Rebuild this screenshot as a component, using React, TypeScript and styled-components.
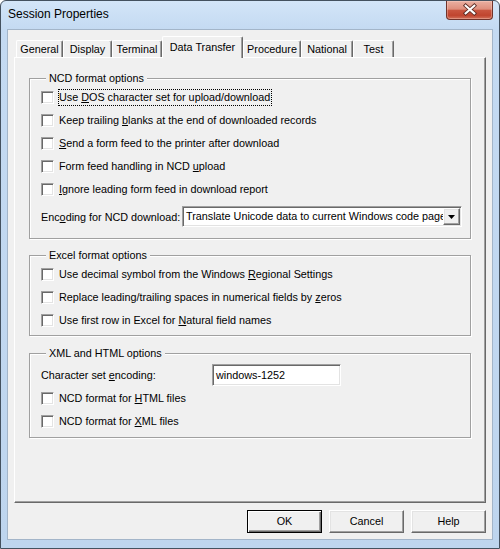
import React from 'react';
import styled, { createGlobalStyle, css } from 'styled-components';

const GlobalStyle = createGlobalStyle`
  html, body {
    margin: 0;
    padding: 0;
    background: #ffffff;
  }
  body {
    font-family: "Liberation Sans", Arial, sans-serif;
    font-size: 10.8px;
    color: #000;
  }
  * {
    box-sizing: border-box;
  }
`;

const raised = css`
  border: 1px solid;
  border-color: #fff #696969 #696969 #fff;
  box-shadow: inset -1px -1px 0 #a0a0a0, inset 1px 1px 0 #e3e3e3;
  background: #f0f0f0;
`;

const sunken = css`
  border: 1px solid;
  border-color: #a0a0a0 #fff #fff #a0a0a0;
  box-shadow: inset 1px 1px 0 #696969, inset -1px -1px 0 #e3e3e3;
  background: #fff;
`;

type Tab = { label: string; width: number; active?: boolean };

const tabs: Tab[] = [
  { label: 'General', width: 47 },
  { label: 'Display', width: 49 },
  { label: 'Terminal', width: 50 },
  { label: 'Data Transfer', width: 81, active: true },
  { label: 'Procedure', width: 58 },
  { label: 'National', width: 52 },
  { label: 'Test', width: 41 },
];

const ncdOptions: React.ReactNode[] = [
  <>Use <u>D</u>OS character set for upload/download</>,
  <>Keep trailing <u>b</u>lanks at the end of downloaded records</>,
  <><u>S</u>end a form feed to the printer after download</>,
  <>Form feed handling in NCD <u>u</u>pload</>,
  <><u>I</u>gnore leading form feed in download report</>,
];

const excelOptions: React.ReactNode[] = [
  <>Use decimal symbol from the Windows <u>R</u>egional Settings</>,
  <>Replace leading/trailing spaces in numerical fields by <u>z</u>eros</>,
  <>Use first row in Excel for <u>N</u>atural field names</>,
];

const xmlOptions: React.ReactNode[] = [
  <>NCD format for <u>H</u>TML files</>,
  <>NCD format for <u>X</u>ML files</>,
];

const CheckList: React.FC<{ items: React.ReactNode[]; focusFirst?: boolean }> = ({ items, focusFirst }) => (
  <Stack>
    {items.map((item, i) => (
      <CheckRow key={i}>
        <CheckBox />
        <Caption $focus={focusFirst && i === 0}>{item}</Caption>
      </CheckRow>
    ))}
  </Stack>
);

const App: React.FC = () => {
  return (
    <>
      <GlobalStyle />
      <Window>
        <TitleBar>
          <Title>Session Properties</Title>
          <CloseButton>
            <svg width="47" height="18" viewBox="0 0 47 18">
              <path d="M19.5 4.5 L28.5 12.5 M28.5 4.5 L19.5 12.5" stroke="#5a2a22" strokeWidth="4" strokeLinecap="square" />
              <path d="M19.5 4.5 L28.5 12.5 M28.5 4.5 L19.5 12.5" stroke="#ffffff" strokeWidth="2.2" strokeLinecap="square" />
            </svg>
          </CloseButton>
        </TitleBar>
        <Client>
          <TabRow>
            {tabs.map(t => (
              <TabItem key={t.label} $w={t.width} $active={t.active}>
                {t.label}
              </TabItem>
            ))}
          </TabRow>
          <Panel>
            <Group $pb={11} $mt={0}>
              <GroupTitle>NCD format options</GroupTitle>
              <CheckList items={ncdOptions} focusFirst />
              <FieldRow $top={8}>
                <FieldLabel $w={141}>Enc<u>o</u>ding for NCD download:</FieldLabel>
                <Select>
                  <SelectValue>Translate Unicode data to current Windows code page</SelectValue>
                  <DropButton>
                    <svg width="7" height="4" viewBox="0 0 7 4">
                      <path d="M0 0 H7 L3.5 4 Z" fill="#000" />
                    </svg>
                  </DropButton>
                </Select>
              </FieldRow>
            </Group>
            <Group $pb={6} $mt={10}>
              <GroupTitle>Excel format options</GroupTitle>
              <CheckList items={excelOptions} />
            </Group>
            <Group $pb={7} $mt={11}>
              <GroupTitle>XML and HTML options</GroupTitle>
              <FieldRow $top={0}>
                <FieldLabel $w={171}>Character set <u>e</u>ncoding:</FieldLabel>
                <TextInput>windows-1252</TextInput>
              </FieldRow>
              <Spacer />
              <CheckList items={xmlOptions} />
            </Group>
          </Panel>
          <ButtonBar>
            <Button $default>OK</Button>
            <Button>Cancel</Button>
            <Button>Help</Button>
          </ButtonBar>
        </Client>
      </Window>
    </>
  );
};

const Window = styled.div`
  width: 500px;
  height: 549px;
  display: flex;
  flex-direction: column;
  border: 1px solid #44515f;
  border-radius: 6px 6px 0 0;
  background: linear-gradient(to bottom, #d3e5f8 0px, #c4daf2 28px, #bed5ee 100%);
  padding: 0 6px 8px 6px;
`;

const TitleBar = styled.div`
  height: 28px;
  display: flex;
  justify-content: space-between;
  align-items: flex-start;
`;

const Title = styled.span`
  margin: 6px 0 0 1px;
  font-size: 12px;
  line-height: 14px;
  color: #000;
`;

const CloseButton = styled.div`
  width: 47px;
  height: 19px;
  border: 1px solid #70332b;
  border-top: none;
  border-radius: 0 0 4px 4px;
  background: linear-gradient(to bottom, #eab0a2 0%, #de8e7c 45%, #c9553f 52%, #c0452f 80%, #d2705a 100%);
  box-shadow: inset 0 0 0 1px rgba(255, 220, 210, 0.35);
  display: flex;
  align-items: center;
  justify-content: center;
`;

const Client = styled.div`
  flex: 1;
  display: flex;
  flex-direction: column;
  background: #f0f0f0;
  border: 1px solid #a3b5c9;
  padding: 6px 6px 0 6px;
`;

const TabRow = styled.div`
  height: 21px;
  display: flex;
  align-items: flex-end;
  padding-left: 2px;
`;

const TabItem = styled.div<{ $w: number; $active?: boolean }>`
  width: ${p => p.$w}px;
  height: ${p => (p.$active ? 22 : 17)}px;
  margin-bottom: ${p => (p.$active ? -1 : 0)}px;
  padding-top: ${p => (p.$active ? 3 : 1)}px;
  position: relative;
  z-index: ${p => (p.$active ? 2 : 1)};
  background: #f0f0f0;
  border-top: 1px solid #fff;
  border-left: 1px solid #fff;
  border-right: 1px solid #696969;
  box-shadow: inset -1px 0 0 #a0a0a0;
  border-radius: 2px 2px 0 0;
  line-height: 14px;
  text-align: center;
  white-space: nowrap;
`;

const Panel = styled.div`
  width: 472px;
  height: 446px;
  display: flex;
  flex-direction: column;
  padding: 14px 14px 0 14px;
  border-top: 1px solid #fff;
  border-left: 1px solid #fff;
  border-right: 1px solid #696969;
  border-bottom: 1px solid #696969;
  box-shadow: inset -1px -1px 0 #a0a0a0;
`;

const Group = styled.fieldset<{ $pb: number; $mt: number }>`
  margin: ${p => p.$mt}px 0 0 0;
  min-width: 0;
  padding: 4px 0 ${p => p.$pb}px 11px;
  border: 1px solid #a0a0a0;
  box-shadow: 1px 1px 0 #fff, inset 1px 1px 0 #fff;
`;

const GroupTitle = styled.legend`
  margin-left: 5px;
  padding: 0 3px;
  line-height: 13px;
  background: #f0f0f0;
`;

const Stack = styled.div`
  display: flex;
  flex-direction: column;
  gap: 6px;
`;

const Spacer = styled.div`
  height: 4px;
`;

const CheckRow = styled.div`
  height: 17px;
  display: flex;
  align-items: center;
  gap: 4px;
`;

const CheckBox = styled.span`
  ${sunken};
  width: 13px;
  height: 13px;
  flex: none;
`;

const Caption = styled.span<{ $focus?: boolean }>`
  border: 1px ${p => (p.$focus ? 'dotted #000' : 'solid transparent')};
  padding: 0 1px 0 0;
  line-height: 15px;
  white-space: nowrap;
`;

const FieldRow = styled.div<{ $top: number }>`
  margin-top: ${p => p.$top}px;
  display: flex;
  align-items: center;
`;

const FieldLabel = styled.span<{ $w: number }>`
  width: ${p => p.$w}px;
  flex: none;
  white-space: nowrap;
`;

const Select = styled.div`
  ${sunken};
  width: 280px;
  height: 21px;
  padding: 1px;
  display: flex;
  align-items: center;
`;

const SelectValue = styled.span`
  flex: 1;
  overflow: hidden;
  white-space: nowrap;
  padding-left: 2px;
  line-height: 17px;
`;

const DropButton = styled.span`
  ${raised};
  width: 17px;
  height: 17px;
  flex: none;
  display: flex;
  align-items: center;
  justify-content: center;
`;

const TextInput = styled.div`
  ${sunken};
  width: 129px;
  height: 22px;
  padding-left: 3px;
  line-height: 20px;
  white-space: nowrap;
`;

const ButtonBar = styled.div`
  display: flex;
  justify-content: flex-end;
  gap: 7px;
  margin-top: 7px;
`;

const Button = styled.div<{ $default?: boolean }>`
  width: 75px;
  height: 23px;
  line-height: 21px;
  text-align: center;
  ${p =>
    p.$default
      ? css`
          border: 1px solid #000;
          background: #f0f0f0;
          box-shadow: inset 1px 1px 0 #fff, inset -1px -1px 0 #696969, inset -2px -2px 0 #a0a0a0;
        `
      : raised};
`;

export default App;
